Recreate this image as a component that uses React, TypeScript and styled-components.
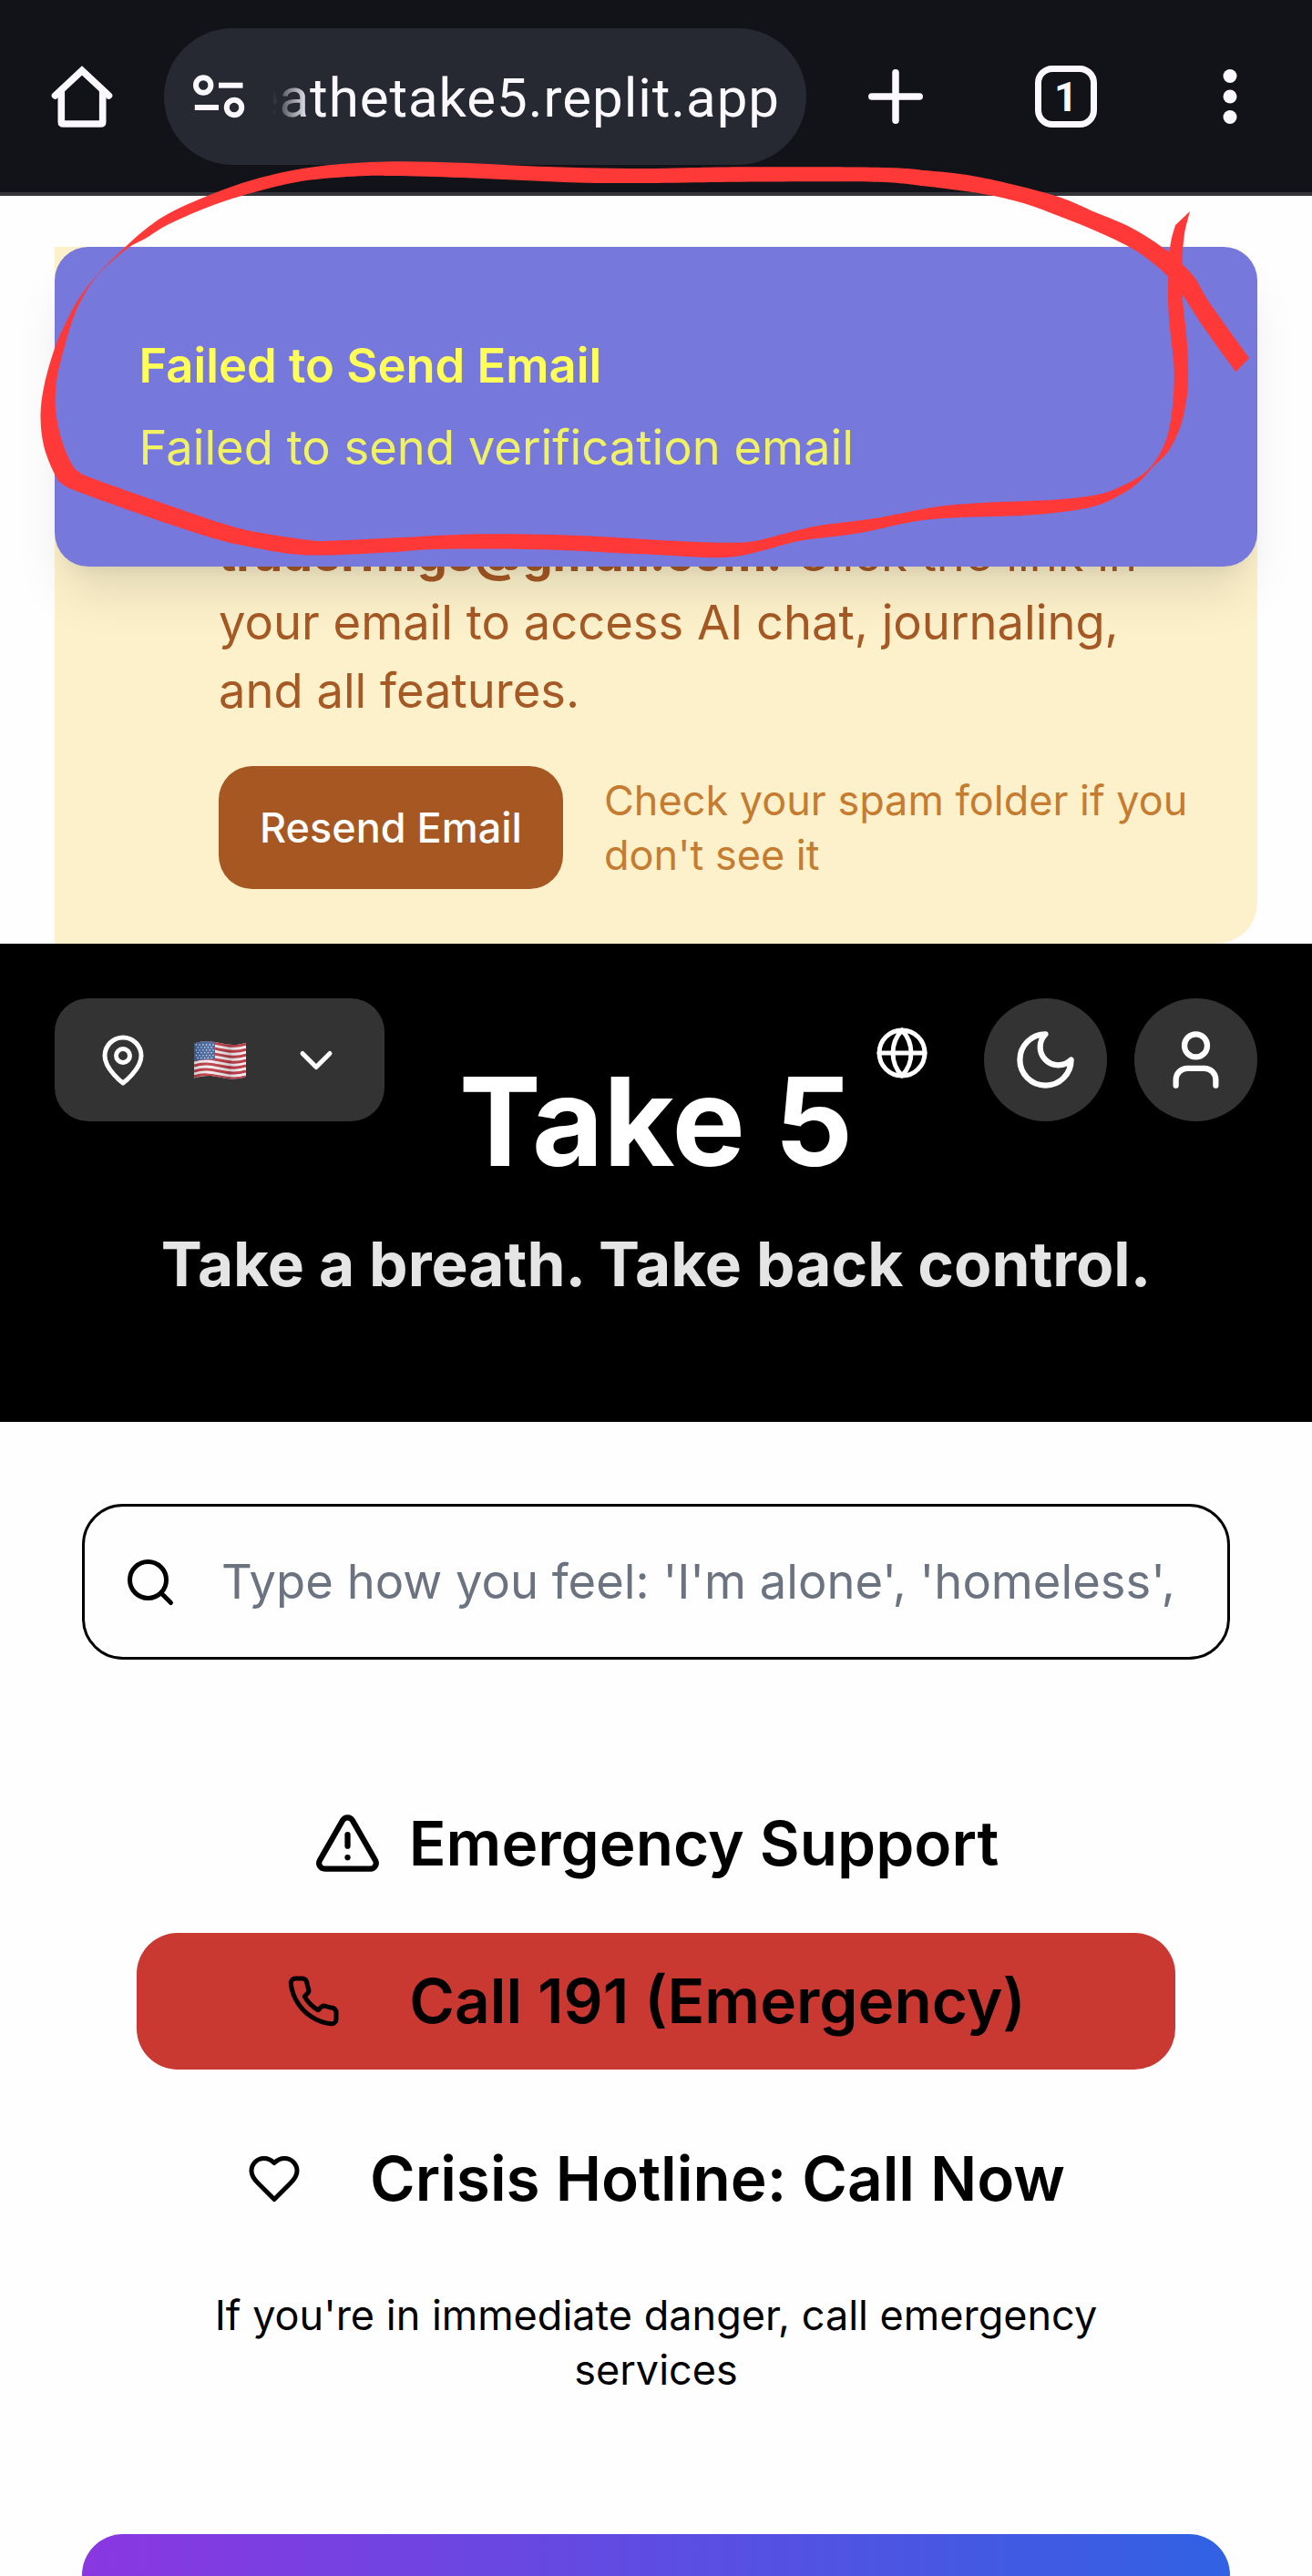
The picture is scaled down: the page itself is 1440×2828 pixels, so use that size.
import React from "react";
import styled, { createGlobalStyle } from "styled-components";

type Point = [number, number];

const GlobalStyle = createGlobalStyle`
  *, *::before, *::after { box-sizing: border-box; }
  body {
    margin: 0;
    background: #fefefe;
    font-family: Inter, "Liberation Sans", sans-serif;
  }
  button { font-family: inherit; border: 0; padding: 0; margin: 0; }
  h1, h2, p { margin: 0; }
  svg { display: block; flex: none; }
`;

const Page = styled.div`
  position: relative;
  width: 1440px;
  height: 2828px;
  overflow: hidden;
  background: #fefefe;
`;

/* Browser chrome */

const BrowserBar = styled.div`
  display: flex;
  align-items: flex-start;
  height: 215px;
  padding: 31px 0 0 45px;
  background: #121318;
  border-bottom: 4px solid #35343a;
`;

const BarIcon = styled.div<{ $ml?: number }>`
  display: flex;
  flex: none;
  align-items: center;
  justify-content: center;
  width: 90px;
  height: 150px;
  margin-left: ${(p) => p.$ml ?? 0}px;
`;

const AddressPill = styled.div`
  display: flex;
  flex: none;
  align-items: center;
  width: 705px;
  height: 150px;
  margin-left: 45px;
  padding: 0 28px 0 30px;
  border-radius: 75px;
  background: #262932;
`;

const UrlText = styled.div`
  display: flex;
  flex: none;
  justify-content: flex-end;
  width: 557px;
  margin-left: 29px;
  padding-top: 3px;
  overflow: hidden;
  white-space: nowrap;
  font-family: Roboto, "Open Sans", sans-serif;
  font-size: 60px;
  line-height: 80px;
  letter-spacing: 0.95px;
  color: #fbf8ff;
  mask-image: linear-gradient(to right, transparent 0, #000 42px);
`;

const TabCount = styled.div`
  display: flex;
  align-items: center;
  justify-content: center;
  width: 68px;
  height: 68px;
  padding-top: 2px;
  border: 7.5px solid #fbf8ff;
  border-radius: 19px;
  color: #fbf8ff;
  font-family: Roboto, sans-serif;
  font-weight: 700;
  font-size: 45px;
  line-height: 52px;
`;

/* Verification banner and toast */

const Banner = styled.section`
  width: 1320px;
  height: 765px;
  margin: 56px 60px 0;
  padding: 300px 40px 60px 180px;
  background: #fcf1ca;
  border-radius: 0 45px 45px 0;
`;

const BannerText = styled.p`
  font-size: 52.5px;
  line-height: 75px;
  color: #a65924;
  white-space: nowrap;
`;

const Address = styled.strong`
  font-weight: 700;
  letter-spacing: -0.1px;
`;

const BannerActions = styled.div`
  display: flex;
  align-items: center;
  gap: 45px;
  margin-top: 45px;
`;

const ResendButton = styled.button`
  flex: none;
  width: 378px;
  height: 135px;
  border-radius: 37px;
  background: #a65722;
  color: #fefefe;
  font-size: 45px;
  font-weight: 500;
`;

const SpamHint = styled.p`
  font-size: 45px;
  line-height: 60px;
  color: #c67c30;
  white-space: nowrap;
`;

const Toast = styled.div`
  position: absolute;
  left: 60px;
  top: 271px;
  width: 1320px;
  height: 351px;
  padding: 93px 92.5px;
  display: flex;
  flex-direction: column;
  gap: 15px;
  border-radius: 37px;
  background: #7678dc;
  box-shadow: 0 37.5px 56px -11px rgba(0, 0, 0, 0.1), 0 15px 22.5px -15px rgba(0, 0, 0, 0.1);
`;

const ToastLine = styled.div<{ $strong?: boolean }>`
  font-size: 52.5px;
  line-height: 75px;
  font-weight: ${(p) => (p.$strong ? 600 : 400)};
  color: #ffff58;
  opacity: ${(p) => (p.$strong ? 1 : 0.9)};
`;

const Annotation = styled.svg`
  position: absolute;
  left: 0;
  top: 0;
  pointer-events: none;
`;

/* Header */

const Header = styled.header`
  height: 525px;
  padding: 60px 60px 0;
  background: #000;
`;

const HeaderRow = styled.div`
  display: flex;
  align-items: flex-start;
`;

const LocationButton = styled.button`
  display: flex;
  flex: none;
  align-items: center;
  justify-content: space-between;
  width: 362px;
  height: 135px;
  padding: 0 45px;
  border-radius: 37px;
  background: #333;
  color: #fff;
`;

const Brand = styled.h1`
  flex: none;
  width: 480px;
  margin: 60px 0 0 58px;
  text-align: center;
  white-space: nowrap;
  font-size: 135px;
  line-height: 150px;
  font-weight: 700;
  color: #fff;
`;

const LanguageSlot = styled.div`
  margin: 30px 60px 0 0;
  color: #fff;
`;

const HeaderActions = styled.div`
  display: flex;
  gap: 30px;
`;

const RoundButton = styled.button`
  display: flex;
  align-items: center;
  justify-content: center;
  width: 135px;
  height: 135px;
  border-radius: 50%;
  background: #333;
  color: #fff;
`;

const Tagline = styled.p`
  margin-top: 29px;
  text-align: center;
  white-space: nowrap;
  font-size: 67.5px;
  line-height: 105px;
  font-weight: 700;
  color: #e5e5e5;
`;

/* Main */

const Main = styled.main`
  display: flex;
  flex-direction: column;
  padding: 90px 90px 0;
  color: #000;
`;

const SearchField = styled.div`
  display: flex;
  align-items: center;
  gap: 48px;
  height: 171px;
  padding: 0 42px;
  border: 3px solid #000;
  border-radius: 45px;
`;

const Placeholder = styled.span`
  padding-bottom: 1px;
  font-size: 52.5px;
  white-space: nowrap;
  color: #6b7280;
`;

const Support = styled.section`
  display: flex;
  flex-direction: column;
  padding: 149px 60px 150px;
`;

const SupportTitle = styled.h2`
  display: flex;
  align-items: center;
  justify-content: center;
  gap: 30px;
  height: 105px;
  font-size: 67.5px;
  font-weight: 600;
  white-space: nowrap;
`;

const CallButton = styled.button<{ $urgent?: boolean }>`
  display: flex;
  align-items: center;
  justify-content: center;
  gap: 75px;
  height: 150px;
  margin-top: ${(p) => (p.$urgent ? 46 : 45)}px;
  border-radius: 45px;
  background: ${(p) => (p.$urgent ? "#c93931" : "transparent")};
  color: #000;
  font-size: 67.5px;
  font-weight: 600;
  white-space: nowrap;
`;

const CallLabel = styled.span`
  padding-bottom: 1px;
`;

const SafetyNote = styled.p`
  margin-top: 45px;
  text-align: center;
  font-size: 45px;
  line-height: 60px;
`;

const GradientCard = styled.div`
  height: 400px;
  border-radius: 45px;
  background: linear-gradient(to right, #8a37e0, #3162e3);
`;

const Icon = ({ size, children }: { size: number; children: React.ReactNode }) => (
  <svg
    width={size}
    height={size}
    viewBox="0 0 24 24"
    fill="none"
    stroke="currentColor"
    strokeWidth={2}
    strokeLinecap="round"
    strokeLinejoin="round"
  >
    {children}
  </svg>
);

const HomeIcon = () => (
  <svg width="90" height="90" viewBox="45 61 90 90" fill="none" stroke="#fbf8ff" strokeWidth="7.6">
    <path d="M60.5 105 L90 77.5 L119.5 105" strokeLinecap="round" strokeLinejoin="miter" />
    <path d="M67.3 99 V134 Q67.3 136 69.5 136 H110.5 Q112.7 136 112.7 134 V99" />
  </svg>
);

const SiteSettingsIcon = () => (
  <svg width="60" height="60" viewBox="210 76 60 60" fill="none" stroke="#fbf8ff" strokeWidth="6">
    <circle cx="223.2" cy="93.5" r="8.2" />
    <path d="M240 93.7 H266.5" />
    <path d="M213.8 118 H240" />
    <circle cx="257" cy="118" r="8.2" />
  </svg>
);

const FLAG_STRIPES = Array.from({ length: 13 }, (_, i) => i);

const FlagIcon = () => {
  const wave = (y: number) => `M0 ${y} C10 ${y - 3.5} 18 ${y - 2} 28 ${y} S46 ${y + 3.5} 57 ${y}`;
  return (
    <svg width="57" height="42" viewBox="0 0 57 42">
      <defs>
        <clipPath id="flagShape">
          <path d="M0 2.5 C10 -1 18 0 28 2 S46 5.5 57 1.8 V39 C46 42.5 38 42 28 39.5 S10 37.5 0 40.5 Z" />
        </clipPath>
        <linearGradient id="flagShade" x1="0" x2="1">
          <stop offset="0" stopColor="#000" stopOpacity="0.14" />
          <stop offset="0.3" stopColor="#fff" stopOpacity="0.08" />
          <stop offset="0.68" stopColor="#000" stopOpacity="0.16" />
          <stop offset="1" stopColor="#fff" stopOpacity="0" />
        </linearGradient>
      </defs>
      <g clipPath="url(#flagShape)">
        <rect width="57" height="42" fill="#f4eef1" />
        {FLAG_STRIPES.filter((i) => i % 2 === 0).map((i) => (
          <path key={i} d={wave(3.2 + i * 2.98)} fill="none" stroke="#bd3a44" strokeWidth="3" />
        ))}
        <path d="M0 0 H23 V20.5 C15 19.5 8 20 0 22.3 Z" fill="#43659f" />
        {[0, 1, 2, 3, 4, 5].map((r) => (
          <path
            key={r}
            d={`M${r % 2 ? 3.6 : 1.8} ${4 + r * 2.9} H22`}
            stroke="#dfe6f2"
            strokeWidth="1.3"
            strokeDasharray="1.3 2.4"
          />
        ))}
        <rect width="57" height="42" fill="url(#flagShade)" />
      </g>
    </svg>
  );
};

/* Hand-drawn marker ring: outer contour, then inner contour back to the tail. */
const RING_OUTER: Point[] = [
  [1371, 393], [1328, 333], [1312, 306], [1297.6, 290], [1283, 276.5], [1243, 250.7], [1202, 233],
  [1156, 214.3], [1078, 195], [1018, 187.3], [963, 183.7], [812, 183.3], [720, 185], [643, 184.3],
  [574, 182], [505, 178.7], [431.6, 177.3], [367, 180.7], [321, 187], [275.5, 198], [230, 214],
  [184, 235], [158, 253], [137.7, 271], [110, 298], [87, 327], [71, 356.7], [59.7, 383.3],
  [48.5, 423.3], [44.5, 456.7], [48.2, 490], [59.7, 520], [68.9, 531.7], [91.8, 542], [170, 570],
  [238.8, 592.3], [284.7, 602.3], [321.4, 608.3], [360, 609.5], [427, 606.3], [486.7, 602.7],
  [597, 603.3], [689, 607.7], [720, 609], [775, 612], [807, 611], [839, 604], [876, 594],
  [913, 589.3], [949.6, 584], [1004.7, 572.3], [1050.6, 568.3], [1133, 565.3], [1197.5, 556.7],
  [1234, 540.7], [1252.6, 526.7], [1265, 513], [1282.5, 495], [1296, 466.7], [1303, 433.3],
  [1304, 400], [1302, 366.7], [1297.6, 323.3], [1297.6, 286.7], [1300, 256.7], [1306, 232],
];

const RING_INNER: Point[] = [
  [1290, 247.3], [1284, 273.3], [1282, 326.7], [1284.7, 366.7], [1288.4, 400], [1288, 433.3],
  [1284, 466.7], [1277, 490], [1264, 511.5], [1248, 524.7], [1220.5, 538.3], [1197.5, 544.3],
  [1156, 548.7], [1092, 551.3], [1046, 554.3], [1014, 558.7], [958.8, 569.3], [903.7, 576.3],
  [876, 582], [830, 593.7], [802.6, 595.7], [766, 595], [720, 592.7], [643, 588.3], [588, 586.7],
  [509.6, 586.7], [436, 590.3], [362.7, 593.7], [339.8, 593], [293.8, 586.3], [252.5, 577.3],
  [183.6, 554.3], [101, 525], [87, 518.3], [79, 510], [68.9, 486.7], [62.9, 463.3], [60.6, 440],
  [62.9, 413.3], [71, 380], [82.6, 343.3], [98.7, 313.3], [114.8, 294], [141, 272], [161, 261],
  [184, 246.7], [230, 226.7], [275.5, 212], [330.6, 199], [395, 193.3], [431.6, 193], [505, 195],
  [574, 198], [643, 200.7], [720, 201], [812, 199.7], [959, 199.7], [1018, 204.7], [1078, 212.7],
  [1124, 223.3], [1165, 238.3], [1202, 253.3], [1239, 270.7], [1262, 286], [1282.5, 304],
  [1297.6, 323.3], [1321.5, 360], [1356.4, 408.3],
];

const smooth = (pts: Point[]) =>
  pts
    .slice(0, -1)
    .map((p1, i) => {
      const p0 = pts[i - 1] ?? p1;
      const p2 = pts[i + 1];
      const p3 = pts[i + 2] ?? p2;
      const c1 = [p1[0] + (p2[0] - p0[0]) / 6, p1[1] + (p2[1] - p0[1]) / 6];
      const c2 = [p2[0] - (p3[0] - p1[0]) / 6, p2[1] - (p3[1] - p1[1]) / 6];
      return `C${c1.join(" ")} ${c2.join(" ")} ${p2.join(" ")}`;
    })
    .join(" ");

const ringPath = `M${RING_OUTER[0].join(" ")} ${smooth(RING_OUTER)} L${RING_INNER[0].join(" ")} ${smooth(RING_INNER)} Z`;

export default function App() {
  return (
    <>
      <GlobalStyle />
      <Page>
        <BrowserBar>
          <BarIcon>
            <HomeIcon />
          </BarIcon>
          <AddressPill>
            <SiteSettingsIcon />
            <UrlText>eathetake5.replit.app</UrlText>
          </AddressPill>
          <BarIcon $ml={53}>
            <svg width="62" height="62" viewBox="0 0 62 62" stroke="#fbf8ff" strokeWidth="7.5" strokeLinecap="round">
              <path d="M31 4.8 V57.2 M4.8 31 H57.2" />
            </svg>
          </BarIcon>
          <BarIcon $ml={97}>
            <TabCount>1</TabCount>
          </BarIcon>
          <BarIcon $ml={90}>
            <svg width="16" height="62" viewBox="0 0 16 62" fill="#fbf8ff">
              <circle cx="8" cy="8.5" r="7.5" />
              <circle cx="8" cy="31" r="7.5" />
              <circle cx="8" cy="53.5" r="7.5" />
            </svg>
          </BarIcon>
        </BrowserBar>

        <Banner>
          <BannerText>
            <Address>tradermigs@gmail.com.</Address> Click the link in
            <br />
            your email to access AI chat, journaling,
            <br />
            and all features.
          </BannerText>
          <BannerActions>
            <ResendButton>Resend Email</ResendButton>
            <SpamHint>
              Check your spam folder if you
              <br />
              don't see it
            </SpamHint>
          </BannerActions>
        </Banner>

        <Header>
          <HeaderRow>
            <LocationButton>
              <Icon size={60}>
                <path d="M20 10c0 6-8 12-8 12s-8-6-8-12a8 8 0 0 1 16 0Z" />
                <circle cx="12" cy="10" r="3" />
              </Icon>
              <FlagIcon />
              <Icon size={60}>
                <path d="m6 9 6 6 6-6" />
              </Icon>
            </LocationButton>
            <Brand>Take 5</Brand>
            <LanguageSlot>
              <Icon size={60}>
                <circle cx="12" cy="12" r="10" />
                <path d="M12 2a14.5 14.5 0 0 0 0 20 14.5 14.5 0 0 0 0-20" />
                <path d="M2 12h20" />
              </Icon>
            </LanguageSlot>
            <HeaderActions>
              <RoundButton>
                <Icon size={75}>
                  <path d="M12 3a6 6 0 0 0 9 9 9 9 0 1 1-9-9Z" />
                </Icon>
              </RoundButton>
              <RoundButton>
                <Icon size={75}>
                  <path d="M19 21v-2a4 4 0 0 0-4-4H9a4 4 0 0 0-4 4v2" />
                  <circle cx="12" cy="7" r="4" />
                </Icon>
              </RoundButton>
            </HeaderActions>
          </HeaderRow>
          <Tagline>Take a breath. Take back control.</Tagline>
        </Header>

        <Main>
          <SearchField>
            <Icon size={60}>
              <circle cx="11" cy="11" r="8" />
              <path d="m21 21-4.3-4.3" />
            </Icon>
            <Placeholder>Type how you feel: 'I'm alone', 'homeless',</Placeholder>
          </SearchField>

          <Support>
            <SupportTitle>
              <Icon size={75}>
                <path d="m21.73 18-8-14a2 2 0 0 0-3.48 0l-8 14A2 2 0 0 0 4 21h16a2 2 0 0 0 1.73-3Z" />
                <path d="M12 9v4" />
                <path d="M12 17h.01" />
              </Icon>
              Emergency Support
            </SupportTitle>
            <CallButton $urgent>
              <Icon size={60}>
                <path d="M22 16.92v3a2 2 0 0 1-2.18 2 19.79 19.79 0 0 1-8.63-3.07 19.5 19.5 0 0 1-6-6 19.79 19.79 0 0 1-3.07-8.67A2 2 0 0 1 4.11 2h3a2 2 0 0 1 2 1.72 12.84 12.84 0 0 0 .7 2.81 2 2 0 0 1-.45 2.11L8.09 9.91a16 16 0 0 0 6 6l1.27-1.27a2 2 0 0 1 2.11-.45 12.84 12.84 0 0 0 2.81.7A2 2 0 0 1 22 16.92z" />
              </Icon>
              <CallLabel>Call 191 (Emergency)</CallLabel>
            </CallButton>
            <CallButton>
              <Icon size={60}>
                <path d="M19 14c1.49-1.46 3-3.21 3-5.5A5.5 5.5 0 0 0 16.5 3c-1.76 0-3 .5-4.5 2-1.5-1.5-2.74-2-4.5-2A5.5 5.5 0 0 0 2 8.5c0 2.3 1.5 4.05 3 5.5l7 7Z" />
              </Icon>
              <CallLabel>Crisis Hotline: Call Now</CallLabel>
            </CallButton>
            <SafetyNote>
              If you're in immediate danger, call emergency
              <br />
              services
            </SafetyNote>
          </Support>

          <GradientCard />
        </Main>

        <Toast>
          <ToastLine $strong>Failed to Send Email</ToastLine>
          <ToastLine>Failed to send verification email</ToastLine>
        </Toast>

        <Annotation width="1440" height="640" viewBox="0 0 1440 640">
          <path d={ringPath} fill="#ff3838" />
        </Annotation>
      </Page>
    </>
  );
}
